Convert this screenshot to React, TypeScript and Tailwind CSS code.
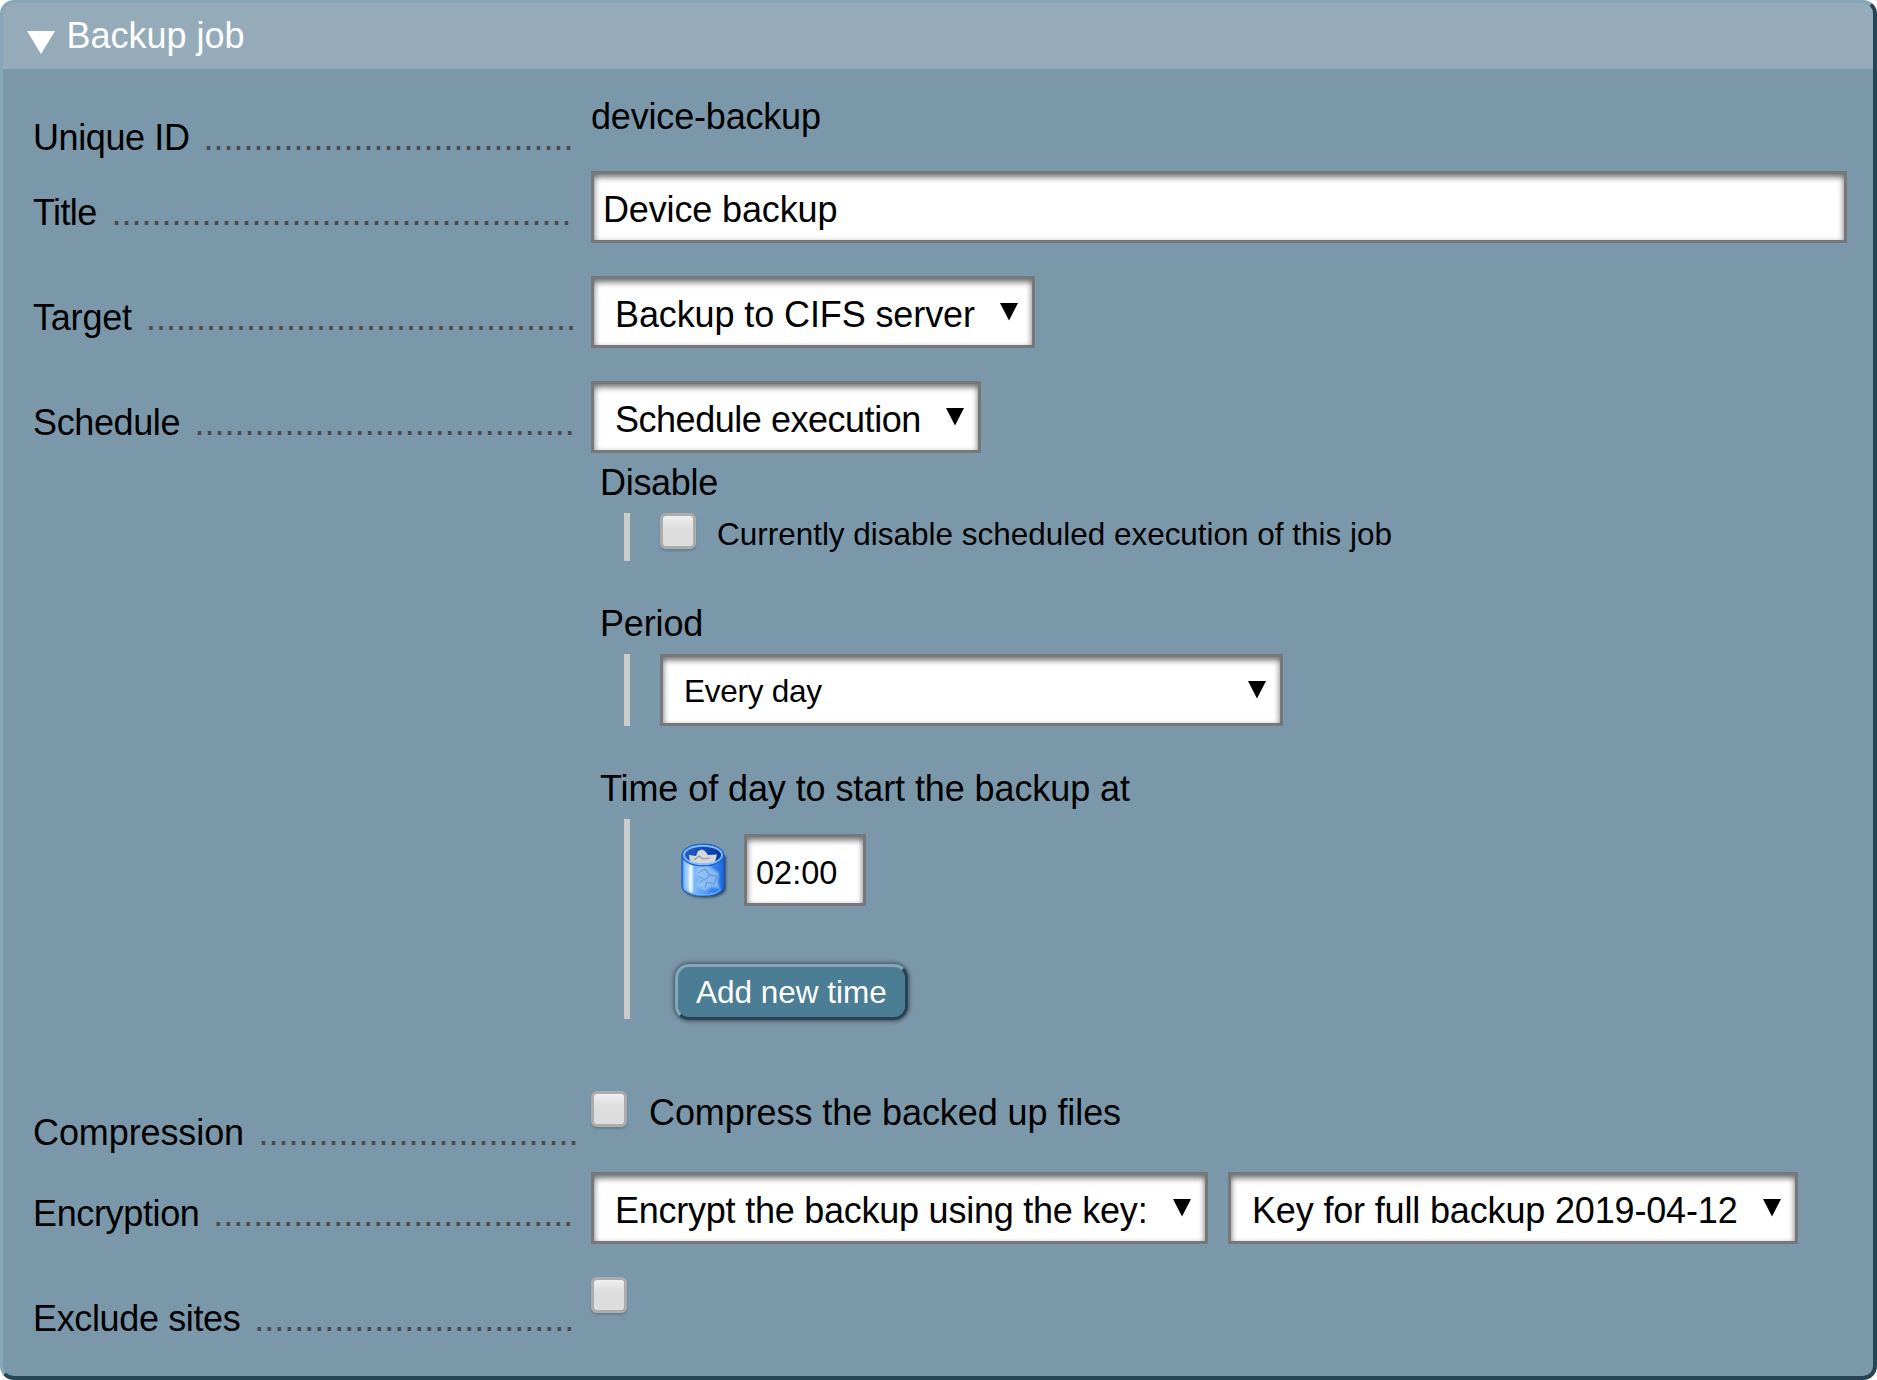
import type { ReactNode } from "react";

function Arrow() {
  return (
    <svg width="18" height="17.5" viewBox="0 0 18 17.5" className="mt-[24.3px] shrink-0">
      <path d="M0 0H18L9 17.5Z" fill="#000" />
    </svg>
  );
}

const fieldBox =
  "box-border flex h-[72px] border-[3px] border-[#76777b] bg-white shadow-[inset_0_3px_6px_rgba(0,0,0,0.6)]";

function Select({ text, width, textStyle }: { text: string; width: string; textStyle: string }) {
  return (
    <div className={`${fieldBox} ${width} shrink-0 justify-between pr-[14px] pl-[21px]`}>
      <span className={`whitespace-nowrap ${textStyle}`}>{text}</span>
      <Arrow />
    </div>
  );
}

function Checkbox() {
  return (
    <div className="box-border size-[36px] shrink-0 rounded-[6px] border-[3px] border-[#acacac] bg-linear-to-b from-[#efefef] to-[#dddddd] to-40% shadow-[0_2px_2px_rgba(60,90,110,0.35)]" />
  );
}

function Row({
  label,
  dots,
  labelStyle,
  height,
  children,
}: {
  label: string;
  dots: number;
  labelStyle: string;
  height: string;
  children: ReactNode;
}) {
  return (
    <div className={`flex ${height}`}>
      <div className="mr-[12px] flex w-[546px] shrink-0 pt-[21px] whitespace-nowrap">
        <span className={`shrink-0 ${labelStyle}`}>{label}</span>
        <span className="text-[#4a4a4d]">{".".repeat(dots)}</span>
      </div>
      {children}
    </div>
  );
}

function Section({
  title,
  titleStyle,
  height,
  children,
}: {
  title: string;
  titleStyle: string;
  height: string;
  children: ReactNode;
}) {
  return (
    <div className={height}>
      <div className={`h-[51px] pl-[9px] ${titleStyle}`}>{title}</div>
      <div className="ml-[33px] w-fit border-l-[6px] border-[#cbcbcb] pl-[30px]">{children}</div>
    </div>
  );
}

function Trash() {
  return (
    <svg width="48" height="58" viewBox="0 0 48 58" className="shrink-0">
      <defs>
        <linearGradient id="can" x1="0" x2="1" y1="0" y2="0">
          <stop offset="0" stopColor="#2f7fee" />
          <stop offset=".07" stopColor="#8cc4fb" />
          <stop offset=".3" stopColor="#7ab9fa" />
          <stop offset=".6" stopColor="#4594f2" />
          <stop offset="1" stopColor="#1b66e0" />
        </linearGradient>
        <linearGradient id="mouth" x1="0" x2="1" y1="0" y2="0">
          <stop offset="0" stopColor="#2560c4" />
          <stop offset="1" stopColor="#0636a4" />
        </linearGradient>
        <filter id="soft" x="-20%" y="-20%" width="140%" height="140%">
          <feGaussianBlur stdDeviation="1.2" />
        </filter>
      </defs>
      <path d="M3 13V45C3 58 45 58 45 45V13Z" fill="#14304a" opacity=".75" filter="url(#soft)" />
      <path d="M1 12V43C1 56 43 56 43 43V12Z" fill="url(#can)" stroke="#1559c8" strokeWidth="1.2" />
      <path d="M6 21V46L12 49V22Z" fill="#c9e4ff" opacity=".8" filter="url(#soft)" />
      <path d="M8 22V49L11.5 50V23Z" fill="#eef7ff" opacity=".85" />
      <g fill="#a9cdf2" opacity=".7" filter="url(#soft)">
        <path d="M17 24L25 21L32 26L38 30L37 39L39 46L30 44L24 48L15 42L18 36L14 31Z" />
      </g>
      <g fill="none" stroke="#4f8fd6" strokeWidth="1.3" opacity=".65">
        <path d="M17 30L24 26L29 32L24 37L17 33M29 32L36 33L33 41L26 39L24 45M18 40L22 37" />
      </g>
      <path d="M4 46C10 54 34 54 40 46" fill="none" stroke="#6fb4ff" strokeWidth="1.5" opacity=".8" />
      <ellipse cx="22" cy="12" rx="20.7" ry="11" fill="url(#mouth)" stroke="#1e62d4" strokeWidth="1.2" />
      <path d="M8 12L15 13L17 8L21 6.5L24 8L27 12L36 11.5L34 19C28 22 15 22 9 19Z" fill="#d5d6d8" />
      <path d="M13 17L18 13L22 16L29 15" fill="none" stroke="#9b9da0" strokeWidth="1.2" />
      <ellipse cx="22" cy="12" rx="19" ry="9.3" fill="none" stroke="#7cbcff" strokeWidth="1.9" />
    </svg>
  );
}

export default function App() {
  return (
    <div className="h-[1380px] w-[1877px] bg-white font-['Liberation_Sans',Arial,sans-serif] text-[36px] leading-[42px] text-black">
      <div className="box-border h-full w-full overflow-hidden rounded-[14px] border-t-[3px] border-r-[4px] border-b-[4px] border-l-[3px] border-t-[#85a7b7] border-r-[#264453] border-b-[#264453] border-l-[#85a7b7] bg-[#7b97aa]">
        <div className="flex h-[66px] bg-[#95abb9] pl-[24px] text-white">
          <svg width="28" height="23" viewBox="0 0 28 23" className="mt-[27.5px] mr-[11.5px]">
            <path d="M0 0H28L14 23Z" fill="#fff" />
          </svg>
          <span className="pt-[12px]">Backup job</span>
        </div>
        <div className="pt-[27px] pl-[30px]">
          <Row label="Unique ID" dots={37} labelStyle="w-[170.5px] tracking-[-0.4px]" height="h-[75px]">
            <span className="tracking-[-0.18px]">device-backup</span>
          </Row>
          <Row label="Title" dots={46} labelStyle="w-[78.4px] tracking-[-0.6px]" height="h-[105px]">
            <div className={`${fieldBox} w-[1256px] pt-[15px] pl-[9px] tracking-[-0.14px]`}>Device backup</div>
          </Row>
          <Row label="Target" dots={43} labelStyle="w-[113px] tracking-[-0.2px]" height="h-[105px]">
            <Select text="Backup to CIFS server" width="w-[444px]" textStyle="pt-[15px] tracking-[-0.11px]" />
          </Row>
          <Row label="Schedule" dots={38} labelStyle="w-[161.6px] tracking-[-0.38px]" height="h-[710px]">
            <div>
              <Select text="Schedule execution" width="w-[390px]" textStyle="pt-[15px] tracking-[-0.47px]" />
              <div className="pt-[9px]">
                <Section title="Disable" titleStyle="tracking-[-0.3px]" height="h-[141px]">
                  <div className="flex h-[48px]">
                    <Checkbox />
                    <span className="ml-[21px] pt-[3px] text-[31.5px] leading-[36px] tracking-[-0.02px] whitespace-nowrap">
                      Currently disable scheduled execution of this job
                    </span>
                  </div>
                </Section>
                <Section title="Period" titleStyle="tracking-[-0.15px]" height="h-[165px]">
                  <Select
                    text="Every day"
                    width="w-[623px]"
                    textStyle="pt-[16px] text-[31.5px] leading-[36px] tracking-[-0.27px]"
                  />
                </Section>
                <Section
                  title="Time of day to start the backup at"
                  titleStyle="tracking-[-0.09px]"
                  height="h-[260px]"
                >
                  <div className="h-[200px] pt-[15px]">
                    <div className="flex">
                      <div className="w-[84px] pt-[9px] pl-[20.5px]">
                        <Trash />
                      </div>
                      <div className={`${fieldBox} w-[122px] pt-[18px] pl-[9px] text-[32.5px] leading-[36px]`}>02:00</div>
                    </div>
                    <div className="mt-[57.5px] ml-[15px] box-border h-[56px] w-[233px] rounded-[14px] border-[3px] border-t-[#85a7b7] border-r-[#264453] border-b-[#264453] border-l-[#85a7b7] bg-[#4b7d94] pt-[7px] pl-[18px] text-[31.5px] leading-[36px] whitespace-nowrap text-white shadow-[0_0_4px_1px_rgba(0,0,0,0.5)]">
                      Add new time
                    </div>
                  </div>
                </Section>
              </div>
            </div>
          </Row>
          <Row label="Compression" dots={32} labelStyle="w-[225.5px] tracking-[-0.1px]" height="h-[81px]">
            <Checkbox />
            <span className="ml-[22px] pt-px tracking-[-0.08px]">Compress the backed up files</span>
          </Row>
          <Row label="Encryption" dots={36} labelStyle="w-[180.3px] tracking-[-0.36px]" height="h-[105px]">
            <Select
              text="Encrypt the backup using the key:"
              width="w-[617px]"
              textStyle="pt-[15px] tracking-[-0.24px]"
            />
            <div className="w-[20px]" />
            <Select
              text="Key for full backup 2019-04-12"
              width="w-[570px]"
              textStyle="pt-[15px] tracking-[-0.16px]"
            />
          </Row>
          <Row label="Exclude sites" dots={32} labelStyle="w-[221.3px] tracking-[-0.36px]" height="h-[90px]">
            <Checkbox />
          </Row>
        </div>
      </div>
    </div>
  );
}
